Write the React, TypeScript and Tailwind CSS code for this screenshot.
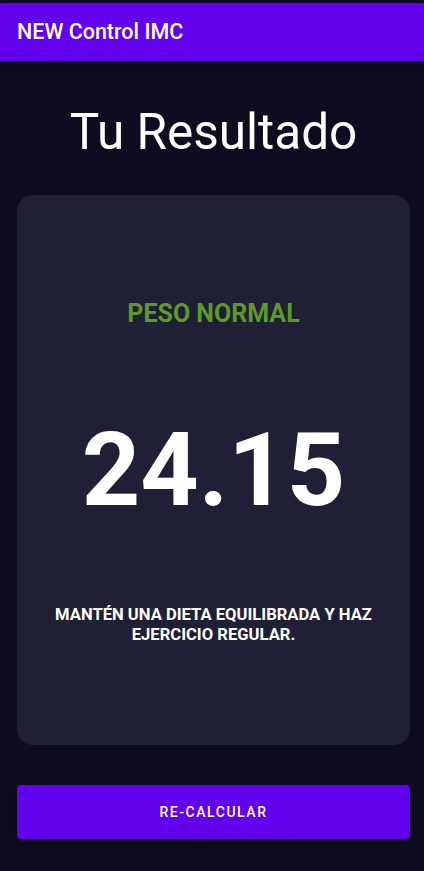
export default function App() {
  return (
    <div
      className="min-h-[871px] w-full bg-[#0e0c20] flex flex-col"
      style={{ fontFamily: "Roboto, 'Liberation Sans', sans-serif" }}
    >
      <div className="h-[3px] bg-[#0e0c20]" />
      <header className="h-[58px] bg-[#6200ee] flex items-center px-[17px] shadow-md">
        <h1 className="text-white text-[21.5px] font-medium">NEW Control IMC</h1>
      </header>

      <main className="flex flex-col pl-[17px] pr-[14px]">
        <h2 className="mt-[42px] text-center text-white text-[49.5px] leading-[58px] font-normal">
          Tu Resultado
        </h2>

        <section className="mt-[34px] h-[550px] rounded-[16px] bg-[#1f1f35] flex flex-col items-center px-4">
          <p className="mt-[104px] text-[25px] leading-[30px] font-bold text-[#5d9a2b]">PESO NORMAL</p>
          <p className="mt-[82px] text-[102px] leading-[119px] font-bold text-white">24.15</p>
          <p className="mt-[75px] text-center text-[16.6px] leading-[20px] font-bold text-white">
            MANTÉN UNA DIETA EQUILIBRADA Y HAZ
            <br />
            EJERCICIO REGULAR.
          </p>
        </section>

        <button className="mt-[40px] h-[54px] w-full rounded-[4px] bg-[#6200ee] text-white text-[14px] font-medium tracking-[0.11em] shadow-md">
          RE-CALCULAR
        </button>
      </main>
    </div>
  );
}
